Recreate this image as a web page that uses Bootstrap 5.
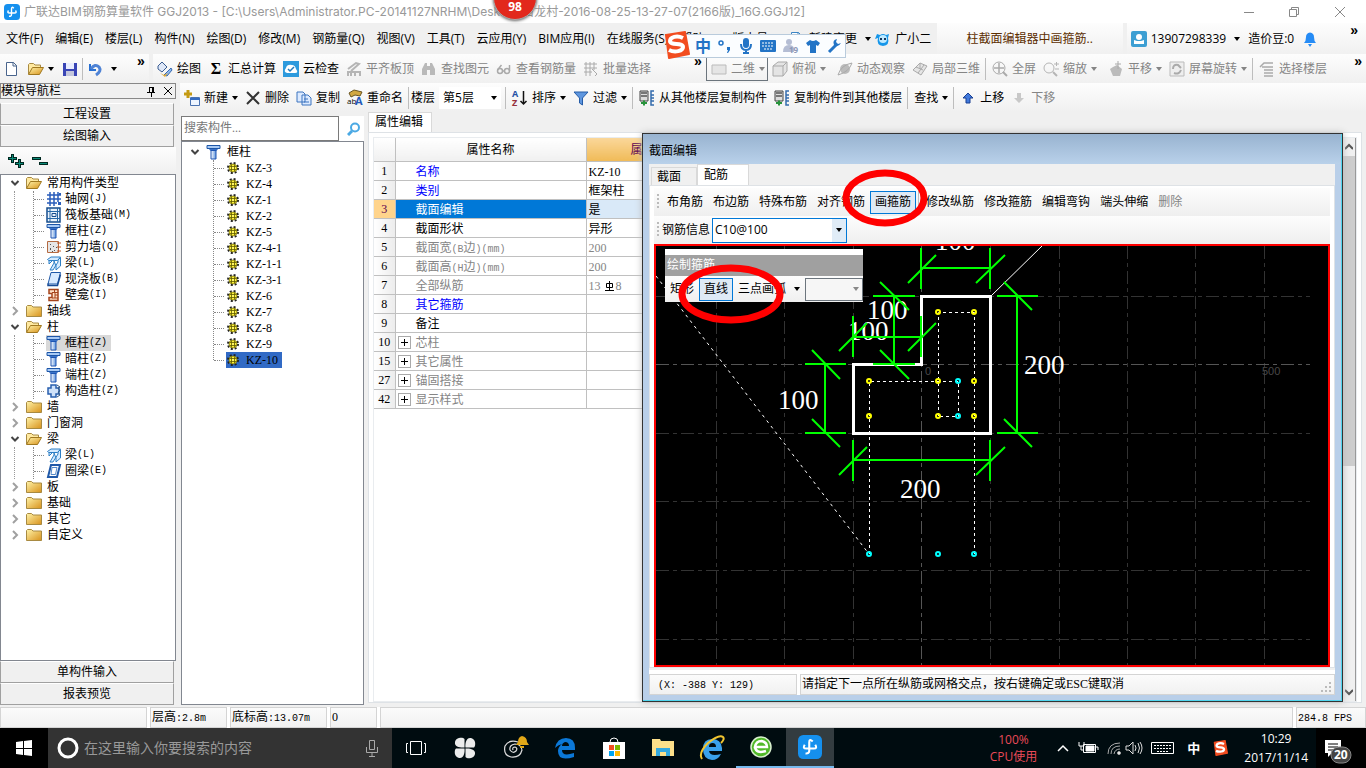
<!DOCTYPE html>
<html lang="zh-CN">
<head>
<meta charset="utf-8">
<meta name="viewport" content="width=device-width, initial-scale=1">
<title>广联达BIM钢筋算量软件 GGJ2013</title>
<link rel="stylesheet" href="https://cdn.jsdelivr.net/npm/bootstrap@5.3.0/dist/css/bootstrap.min.css">
<style>
body{font:12px/16px "Open Sans","Noto Sans CJK SC",sans-serif;color:#000;background:#f0f0f0;min-width:1200px;white-space:nowrap}
a{color:inherit;text-decoration:none}
button,input,select{font:inherit;color:inherit}
svg{flex:none;display:block}
.plain{border:0;background:none;padding:0}
.ic{width:16px;height:16px;overflow:visible}
.titlebar{height:23px;background:#fff;color:#999;font-family:Inter,"Noto Sans CJK SC",sans-serif}
.menubar{height:31px}
.menubar .entry{padding:0 6px}
.soft{background:linear-gradient(#fdfdfd,#f0f0f0)}
.notice{width:186px;color:#5c2e00}
.tools{height:29px}
.tb{border:0;background:none;padding:0 3px 0 4px;display:flex;align-items:center;gap:4px;height:24px}
.tb:disabled,.off{color:#858585}
.caret{width:0;height:0;border:3px solid transparent;border-top:4px solid currentColor;border-bottom:0;margin:0 4px 0 3px}
.caret-near{margin:0}
.vline{width:1px;height:22px;background:#bdbdbd;margin:0 2px}
.more{font:bold 14px/14px "Liberation Sans",sans-serif;align-self:flex-start}
.song{font-family:"Liberation Serif","Noto Sans CJK SC",serif}
.song i,.mono{font:normal 10px/12px "Liberation Mono","Noto Sans CJK SC",monospace}
/* left dock */
.dock{width:176px;flex:none}
.dock-head{height:16px;border:1px solid #888}
.dock-btn{height:22px;border:1px solid #a0a0a0;border-top-color:#fff;background:#f0f0f0;padding:0;width:174px}
.tree{border:1px solid #828790;background:#fff}
.node{height:16px;display:flex;align-items:center;padding-left:9px}
.node .chev{width:10px;height:10px;margin-right:6px}
.node .fold{margin-right:5px}
.kids{margin-left:13px;border-left:1px dotted #999;padding-left:18px}
.kids .node{padding-left:0}
.kids .node::before,.parts .node::before{content:"";width:10px;border-top:1px dotted #888;margin-right:2px}
.kids .inner{border-left:1px dotted #888;margin-bottom:7px}
.kids .inner .node:last-child{margin-bottom:-7px}
.kids .ic{margin-right:3px}
/* component list */
.comp{width:188px;flex:none;padding-left:5px}
.find{height:25px;border:1px solid #7a7a7a;width:158px;background:#fff;padding:0 2px}
.find::placeholder{color:#777;opacity:1}
.parts-tree{padding-top:2px}
.parts{margin-left:31px;border-left:1px dotted #888;height:200px}
.parts .node{padding-left:0}
.parts .node svg{width:14px;height:14px}
.parts .tag{height:16px;padding:0 4px 0 0;display:flex;align-items:center;gap:6px}
.parts .sel{background:#316ac5}
/* property grid */
.tabtop{height:20px;width:64px;background:#fff;border:1px solid #d9d9d9;border-bottom:0;padding:1px 6px}
.grid{width:970px;table-layout:fixed;border-collapse:collapse}
.grid td,.grid th{height:19px;line-height:16px;border:1px solid #c0c0c0;border-width:0 1px 1px 0;padding:2px 2px 0;font-weight:400}
.grid thead th{height:23px;background:linear-gradient(#fff,#f0f0f0);text-align:center}
.grid tbody th{text-align:center;background:linear-gradient(90deg,#fff,#ececec);padding:0}
.grid .key{padding:2px 0 0 20px}
.grid .tree-key{padding-left:2px}
.grid .blue{color:#00f}
.box{width:13px;height:13px;border:1px solid #aaa;margin-right:5px;padding:1px}
/* editor window */
.editor{position:absolute;left:466px;right:23px;top:21px;bottom:5px;border:1px solid #333;background:#b9cfe9;padding:0 7px 6px 6px;box-shadow:inset -1px -1px #50d5ee,0 0 7px #bbb;display:flex;flex-direction:column}
.editor-title{height:30px;margin:0 -6px;padding:9px 6px 0;background:linear-gradient(#98b3d0,#b9d1ea)}
.pagetab{border:1px solid #d9d9d9;border-bottom:0;background:#f0f0f0;height:18px;padding:0 5px;text-align:left;width:46px}
.pagetab.on{background:#fff;height:21px;width:52px;padding:0 6px}
.sheet{padding:2px 4px 0;min-height:0}
.strip{height:28px;background:linear-gradient(#fdfdfd,#efefef)}
.strip .cmd{border:0;background:none;padding:0 5px;height:24px}
.strip .cmd:disabled{color:#858585}
.strip .cmd.on{border:1px solid #0078d7;background:#dfeaf5;padding:0 4px;height:23px}
.grip{width:2px;height:16px;margin:0 3px;background:repeating-linear-gradient(#bbb 0 2px,transparent 2px 4px)}
.combo{border:1px solid #0078d7;background:#fff;height:25px;width:135px;margin-left:2px}
.mode{appearance:none;width:58px;height:23px;background:#f6f6f6 url("data:image/svg+xml,%3Csvg xmlns='http://www.w3.org/2000/svg' width='6' height='4'%3E%3Cpath d='M0 0h6L3 4z' fill='%23888'/%3E%3C/svg%3E") no-repeat right 3px center}
.stage{border:2px solid #f00;background:#000;flex:1;min-height:0;overflow:hidden}
.float{left:9px;top:3px;width:198px;border-top:6px solid #fff}
.float-title{height:21px;background:#a0a0a0;color:#fff;padding:2px}
.ring{position:absolute;pointer-events:none}
.cells{gap:3px}
.statcell{border:1px solid #d4d4d4;height:21px;line-height:19px;background:linear-gradient(#fbfbfb,#f1f1f1);padding:0 1px}
.rail{width:15px;background:#f0f0f0;border-right:1px solid #999}
.thumb{height:310px;background:#cdcdcd}
/* overlays */
.ime{left:668px;top:34px;width:178px;height:24px;border:1px solid #b9cbdc;background:#fbfdff;color:#2374c6;padding-left:22px;gap:7px}
.count{left:493px;top:-24px;width:44px;height:44px;border-radius:50%;background:#e2281c;border:1px solid #aaa;box-shadow:0 1px 3px #666;color:#fff;font-weight:700;padding-top:22px;text-align:center}
/* taskbar */
.taskbar{height:40px;background:#000c10;color:#fff}
.ask{width:344px;background:#333;padding:0 13px 0 8px}
.ask input{background:none;border:0;font-size:14px;flex:1;outline:0;padding:0}
.ask input::placeholder{color:#999;opacity:1}
.app{width:50px;height:40px;border:0;background:none;padding:0;display:flex;align-items:center;justify-content:center}
.app.slim{width:48px}
.app.live{border-bottom:2px solid #76b9ed}
.app.front{background:#333c40;width:48px}
.cpu{color:#e84a58;line-height:17px}
.clock{line-height:19px}
.bell{width:50px;height:40px}
</style>
</head>
<body class="vh-100 d-flex flex-column overflow-hidden position-relative">
<svg width="0" height="0" class="position-absolute">
<defs>
<linearGradient id="gy" x2="1" y2="1"><stop stop-color="#fff3a8"/><stop offset="1" stop-color="#d8921c"/></linearGradient>
<linearGradient id="gb" x2="1"><stop stop-color="#fff"/><stop offset="1" stop-color="#5d93dd"/></linearGradient>
<symbol id="down" viewBox="0 0 10 10"><path d="M1.500 3l3.500 3.500L8.500 3" fill="none" stroke="#444" stroke-width="2"/></symbol>
<symbol id="right" viewBox="0 0 10 10"><path d="M3 1l4 4-4 4" fill="none" stroke="#a0a0a0" stroke-width="2"/></symbol>
<symbol id="fo" viewBox="0 0 16 16"><path d="M.5 13V3.500l1-1h4l1.500 1.500h5.500v2.500" fill="#ffe9a0" stroke="#a88a42"/><path d="M.5 13.500L4.500 6.500h11l-4 7z" fill="url(#gy)" stroke="#a07820"/></symbol>
<symbol id="fc" viewBox="0 0 16 16"><path d="M.5 13.500V3.500l1-1h4L7 4h8.500v9.500z" fill="url(#gy)" stroke="#a88a42"/></symbol>
<symbol id="net" viewBox="0 0 16 16"><path d="M4 1v14M8 1v14M12 1v10M1 4h14M1 8h14M1 12h10" stroke="#2a5dbb" stroke-width="1.500"/><path d="M12 11h3v3h-3zM13 2h2v2h-2z" fill="#2a5dbb"/></symbol>
<symbol id="raft" viewBox="0 0 16 16"><path d="M1 1h13v14H1z" fill="#e8f2fc" stroke="#164c8c" stroke-width="1.500"/><path d="M4 1v14M11.500 1v14M1 4.500h13M1 11.500h13" stroke="#2869a8"/><path d="M6 6.500h4v3H6z" fill="none" stroke="#164c8c"/></symbol>
<symbol id="col" viewBox="0 0 16 16"><path d="M1 1.500h13v3H1z" fill="#a8caf5" stroke="#1d56a8"/><path d="M3 5h9l-1.500 2h-6z" fill="#3a72c8"/><path d="M5 6.500h5v8.500H5z" fill="url(#gb)" stroke="#1e55b2"/></symbol>
<symbol id="wall" viewBox="0 0 16 16"><path d="M1.500 2.500h11v11h-11z" fill="#e6e6e6" stroke="#b46a42"/><path d="M4 5h1v1H4zM7 7h1v1H7zM4 9h1v2H4zM8 11h1v1H8zM10 8h1v1h-1zM6 12h1v1H6z" fill="#555"/><path d="M11 4h4M11 8h4M11 12h4" stroke="#c35420"/></symbol>
<symbol id="beam" viewBox="0 0 16 16"><path d="M1.500 4.500L5 2h9.500l-3 3.500h-9z" fill="#d5ebff" stroke="#2d7fc5"/><path d="M3 6v3l3-3M8 6v2l-4 7h3l5-8V5l2.500-2.500V11L10 15v-4z" fill="#d5ebff" stroke="#2d7fc5"/></symbol>
<symbol id="slab" viewBox="0 0 16 16"><path d="M5 1.500h9.500L11.500 13H2z" fill="#d8eaff" stroke="#1f58a8"/><path d="M2 12.500v2h9.500l3-11" fill="none" stroke="#174b96" stroke-width="1.500"/></symbol>
<symbol id="ring" viewBox="0 0 16 16"><path d="M5 2h9L11 14H2z" fill="#fff" stroke="#1f58a8" stroke-width="2"/><path d="M6 4.500h5L9.500 11.500H5z" fill="none" stroke="#5489c8"/></symbol>
<symbol id="niche" viewBox="0 0 16 16"><path d="M3 2.500h9v11H3v-3h3v-4H3z" fill="#ffe2c8" stroke="#a5441c" stroke-width="1.500"/><path d="M6 5.500h6M9 8h3M6 11h6M8.500 3v2.500M9 6v5" stroke="#a5441c"/></symbol>
<symbol id="cons" viewBox="0 0 16 16"><path d="M5 2h5v3h3v6h-3v3H5v-3H2V5h3z" fill="#cfe2fa" stroke="#285fae" stroke-width="1.500"/><path d="M11 2l3 2-2 1 2 3-2 1 2 3-3 2" fill="none" stroke="#31557f"/></symbol>
<symbol id="gear" viewBox="0 0 14 14"><circle cx="7" cy="7" r="5" fill="none" stroke="#222" stroke-width="2" stroke-dasharray="2 1.930"/><circle cx="7" cy="7" r="4" fill="#fff23a" stroke="#6e6800" stroke-width=".8"/><path d="M5.500 4v6M8.500 4v6M4 5.500h6M4 8.500h6" stroke="#5f5a00" stroke-width=".8"/><path d="M6.500 6.500h1v1h-1z" fill="#fff"/></symbol>
<symbol id="logo" viewBox="0 0 16 16"><rect width="16" height="16" rx="3.500" fill="#1590ee"/><path d="M9.800 4.300Q7.500 2 7.500 5v5.500q0 2-2.500 1.800M4.500 6.500Q2.800 9 5.500 9h5q2.700 0 1-2.500" fill="none" stroke="#fff" stroke-width="1.400"/></symbol>
<symbol id="sogou" viewBox="0 0 28 28"><path d="M4 4L23 1l4 22L7 27z" fill="#f24d20" stroke="#f24d20" stroke-linejoin="round" stroke-width="2"/><path d="M21 7c-6-3-13-1-13 3 0 5 13 1 13 6 0 4-8 6-14 3" fill="none" stroke="#fff" stroke-width="4"/></symbol>
<symbol id="gray3" viewBox="0 0 16 16"><path d="M1 5l5-4h9v9l-4 5H1zM1 5h10v10M11 5l4-4" fill="#e4e4e4" stroke="#aaa"/></symbol>
<symbol id="floors" viewBox="0 0 16 16"><path d="M1 1h8v10H1z" fill="#ddd" stroke="#444"/><path d="M2 3h6M2 6h6" stroke="#555" stroke-width="1.500"/><path d="M2 13h6M5 10.500v5" stroke="#28933b" stroke-width="2"/><path d="M15 1h-3v14h3M12 5h3M12 8h3M12 11h3" fill="none" stroke="#356cad" stroke-width="1.500"/></symbol>
</defs></svg>

<header class="titlebar d-flex align-items-center ps-1 pe-3">
<svg width="16" height="16"><use href="#logo"/></svg>
<span class="ps-1 flex-grow-1">广联达BIM钢筋算量软件 GGJ2013 - [C:\Users\Administrator.PC-20141127NRHM\Desktop\白龙村-2016-08-25-13-27-07(2166版)_16G.GGJ12]</span>
<svg width="106" height="12" fill="none" stroke="#888"><path d="M0 6.500h10M45.500 3.500h7v7h-7zM47.500 3V1.500h7v7H53M91 1l10 10M101 1L91 11"/></svg>
</header>

<nav class="menubar d-flex align-items-center">
<div class="d-flex flex-grow-1">
<a class="entry" href="#">文件(F)</a><a class="entry" href="#">编辑(E)</a><a class="entry" href="#">楼层(L)</a><a class="entry" href="#">构件(N)</a><a class="entry" href="#">绘图(D)</a><a class="entry" href="#">修改(M)</a><a class="entry" href="#">钢筋量(Q)</a><a class="entry" href="#">视图(V)</a><a class="entry" href="#">工具(T)</a><a class="entry" href="#">云应用(Y)</a><a class="entry" href="#">BIM应用(I)</a><a class="entry" href="#">在线服务(S)</a><a class="entry" href="#">帮助(H)</a><a class="entry" href="#">版本号(B)</a>
<a class="d-flex align-items-center gap-1" href="#"><svg width="16" height="16" fill="#fff" stroke="#3b85c5"><path d="M2.500 1.500h7l4 4v9h-11zM9 1v5h5M6 11h8"/></svg>新建变更<span class="caret ms-1"></span></a>
<a class="d-flex align-items-center gap-1" href="#"><svg width="16" height="16"><path d="M2 3l3 1q3-2 6 0l3-1-1 4q2 7-5 8-7-1-5-8L0 8z" fill="#1596ea"/><circle cx="8" cy="8" r="4" fill="#bfe9ff"/><path d="M5 7h2v2H5zM9 7h2v2H9z" fill="#14375c"/></svg>广小二</a>
</div>
<div class="d-flex">
<a class="soft notice text-center py-2 me-1" href="#">柱截面编辑器中画箍筋..</a>
<div class="soft d-flex align-items-center ps-1 gap-1">
<svg class="ic" viewBox="0 0 16 16"><rect width="16" height="16" rx="2" fill="#3d9fd3"/><circle cx="8" cy="6" r="3" fill="#fff"/><path d="M3 13V9l3 1h4l3-1v4z" fill="#fff"/></svg>
<a href="#">13907298339</a><span class="caret ms-1"></span><span>造价豆:0</span>
<svg class="ms-1" width="16" height="16"><path d="M2 12q2-2 2-6 0-4 4-4.500Q12 2 12 6q0 4 2 6zM6 13h4l-2 3z" fill="#258bf5"/></svg>
<span class="more ps-4 ms-1 pe-2">»</span>
</div></div>
</nav>

<div class="tools d-flex align-items-center">
<div class="soft d-flex align-items-center ps-1 h-100" style="width:149px">
<button class="plain" aria-label="新建"><svg class="ic" viewBox="0 0 16 16"><path d="M2.500 1.500h7l3 3v10h-10zM9 1v4h4" fill="#fff" stroke="#49648c"/></svg></button>
<button class="plain ps-2 d-flex align-items-center" aria-label="打开"><svg class="ic" viewBox="0 0 16 16"><use href="#fo"/></svg><span class="caret ms-1"></span></button>
<button class="plain ps-1" aria-label="保存"><svg class="ic" viewBox="0 0 16 16"><path d="M1 2h14v13H1z" fill="#3945b5"/><path d="M4 2h8v6H4z" fill="#e9edff"/><path d="M4 10h8v5H4z" fill="#c3c6dc"/></svg></button>
<span class="vline ms-1 me-1"></span>
<button class="plain d-flex align-items-center" aria-label="撤销"><svg class="ic" viewBox="0 0 16 16"><path d="M3 3v6h6" fill="none" stroke="#286fd1" stroke-width="2"/><path d="M4 8q4-6 8-2 3 4-3 8" fill="none" stroke="#4f83d5" stroke-width="3"/></svg><span class="caret ms-2"></span></button>
<span class="more ps-3">»</span>
</div>
<div class="soft d-flex align-items-center h-100 ms-1 flex-grow-1">
<button class="tb"><svg class="ic" viewBox="0 0 16 16"><path d="M1 5l4-4 5 5-5 5-4-3z" fill="#dfe8f8" stroke="#3a5c91"/><path d="M7 14l7-7 1 2-5 6z" fill="#8db7ee" stroke="#3668ae"/><path d="M3 12l4 2 4-2-3 4z" fill="#e0aa32"/></svg>绘图</button>
<button class="tb"><b class="ic text-center fs-6 song">Σ</b>汇总计算</button>
<button class="tb"><svg class="ic" viewBox="0 0 16 16"><path d="M0 0h16v16H0z" fill="#2d9add"/><path d="M4 12q-4-1-1-5 1-4 6-3 3 0 4 4 3 4-1 4z" fill="#fff"/><path d="M5 8l2 2 4-4" fill="none" stroke="#237bbc" stroke-width="1.500"/></svg>云检查</button>
<button class="tb" disabled><svg class="ic" viewBox="0 0 16 16"><path d="M2 8l8-6 3 1-8 7M2 15v-4h12v4M5 15v-5M9 15v-5" fill="none" stroke="#b5b5b5" stroke-width="2"/></svg>平齐板顶</button>
<button class="tb" disabled><svg class="ic" viewBox="0 0 16 16"><path d="M1 14V8l3-6h2v12zM9 14V2h2l3 6v6zM6 5h3v4H6z" fill="#b9b9b9"/></svg>查找图元</button>
<button class="tb" disabled><svg class="ic" viewBox="0 0 16 16" fill="none" stroke="#aaa" stroke-width="1.500"><circle cx="4" cy="10" r="2.500"/><circle cx="11" cy="10" r="2.500"/><path d="M1.500 9l4-5M13.500 10V4M6 10h3"/></svg>查看钢筋量</button>
<button class="tb" disabled><svg class="ic" viewBox="0 0 16 16" fill="none" stroke="#aaa"><path d="M1 3h13M1 7h13M1 11h8M3 1v14M7 1v14M11 1v8M9 8l5 5-2 2"/></svg>批量选择</button>
<span class="more ps-4 ms-3 me-1">»</span>
<button class="tb border border-secondary" disabled style="width:62px"><svg class="ic" viewBox="0 0 16 16"><path d="M1 4h14v9H1z" fill="#e5e5e5" stroke="#bbb"/></svg>二维<span class="caret caret-near"></span></button>
<button class="tb" disabled><svg class="ic"><use href="#gray3"/></svg>俯视<span class="caret caret-near"></span></button>
<button class="tb ms-1" disabled><svg class="ic" viewBox="0 0 16 16"><circle cx="8" cy="8" r="5" fill="#bbb"/><path d="M1 14Q4 4 15 2 12 11 1 14" fill="none" stroke="#aaa"/></svg>动态观察</button>
<button class="tb" disabled><svg class="ic" viewBox="0 0 16 16"><path d="M1 9l7-7 7 3-6 9zM4 6l7 3M6 12l6-8M8 2v6" fill="#e5e5e5" stroke="#aaa"/></svg>局部三维</button>
<span class="vline"></span>
<button class="tb" disabled><svg class="ic" viewBox="0 0 16 16" fill="none" stroke="#aaa"><circle cx="7" cy="7" r="6"/><path d="M7 2v10M2 7h10" stroke-width="1.500"/><path d="M11 11l4 4" stroke-width="2"/></svg>全屏</button>
<button class="tb" disabled><svg class="ic" viewBox="0 0 16 16" fill="none" stroke="#b5b5b5"><circle cx="6" cy="7" r="5"/><path d="M10 11l4 4" stroke-width="2"/><path d="M11 3h5M13.500 1v4M12 8h4"/></svg>缩放<span class="caret caret-near"></span></button>
<button class="tb ms-1" disabled><svg class="ic" viewBox="0 0 16 16"><path d="M2 8l3-2 4-2 5 4-2 7H5z" fill="#bbb"/><path d="M10 0v8M7 3h6" stroke="#aaa"/></svg>平移<span class="caret caret-near"></span></button>
<button class="tb" disabled><svg class="ic" viewBox="0 0 16 16"><path d="M1 1h14v14H1z" fill="#eee" stroke="#bbb"/><path d="M4 8q0-5 5-4l3 3M12 9q-2 5-7 3" fill="none" stroke="#aaa" stroke-width="2"/></svg>屏幕旋转<span class="caret caret-near"></span></button>
<span class="vline"></span>
<button class="tb" disabled><svg class="ic" viewBox="0 0 16 16"><path d="M1 6l4-4h9M3 6h11M5 9h9M5 12h9M5 15h9" fill="none" stroke="#aaa" stroke-width="1.500"/></svg>选择楼层</button>
<span class="more ms-auto pe-1">»</span>
</div></div>

<main class="flex-grow-1 d-flex" style="min-height:0">
<aside class="dock d-flex flex-column song">
<div class="dock-head d-flex align-items-center mb-1"><span class="flex-grow-1">模块导航栏</span>
<svg width="30" height="12" fill="none" stroke="#000"><path d="M4.500 2v5M8.500 2v5M4 2.500h4M2 7.500h8M6.500 8v4M7.500 2v5M19 2l8 8M27 2l-8 8"/></svg></div>
<button class="dock-btn">工程设置</button><button class="dock-btn">绘图输入</button>
<div class="d-flex align-items-center gap-2 px-2 soft" style="height:27px">
<button class="plain" aria-label="全部展开"><svg width="16" height="16"><path d="M4.500 1v9M0 5.500h9M11.500 6v9M7 10.500h9" stroke="#002820" stroke-width="3"/><path d="M4.500 2v7M1 5.500h7M11.500 7v7M8 10.500h7" stroke="#0c8a78"/></svg></button>
<button class="plain" aria-label="全部折叠"><svg width="16" height="16"><path d="M0 5.500h9M7 10.500h9" stroke="#002820" stroke-width="3"/><path d="M1 5.500h7M8 10.500h7" stroke="#0c8a78"/></svg></button></div>
<div class="tree flex-grow-1 overflow-hidden">
<div class="node"><svg class="chev"><use href="#down"/></svg><svg class="ic fold"><use href="#fo"/></svg>常用构件类型</div>
<div class="kids"><div class="inner">
<div class="node"><svg class="ic"><use href="#net"/></svg>轴网<i>(J)</i></div>
<div class="node"><svg class="ic"><use href="#raft"/></svg>筏板基础<i>(M)</i></div>
<div class="node"><svg class="ic"><use href="#col"/></svg>框柱<i>(Z)</i></div>
<div class="node"><svg class="ic"><use href="#wall"/></svg>剪力墙<i>(Q)</i></div>
<div class="node"><svg class="ic"><use href="#beam"/></svg>梁<i>(L)</i></div>
<div class="node"><svg class="ic"><use href="#slab"/></svg>现浇板<i>(B)</i></div>
<div class="node"><svg class="ic"><use href="#niche"/></svg>壁龛<i>(I)</i></div></div></div>
<div class="node"><svg class="chev"><use href="#right"/></svg><svg class="ic fold"><use href="#fc"/></svg>轴线</div>
<div class="node"><svg class="chev"><use href="#down"/></svg><svg class="ic fold"><use href="#fo"/></svg>柱</div>
<div class="kids"><div class="inner">
<div class="node"><span class="d-flex align-items-center pe-1" style="background:#d9d9d9"><svg class="ic"><use href="#col"/></svg>框柱<i>(Z)</i></span></div>
<div class="node"><svg class="ic"><use href="#col"/></svg>暗柱<i>(Z)</i></div>
<div class="node"><svg class="ic"><use href="#col"/></svg>端柱<i>(Z)</i></div>
<div class="node"><svg class="ic"><use href="#cons"/></svg>构造柱<i>(Z)</i></div></div></div>
<div class="node"><svg class="chev"><use href="#right"/></svg><svg class="ic fold"><use href="#fc"/></svg>墙</div>
<div class="node"><svg class="chev"><use href="#right"/></svg><svg class="ic fold"><use href="#fc"/></svg>门窗洞</div>
<div class="node"><svg class="chev"><use href="#down"/></svg><svg class="ic fold"><use href="#fo"/></svg>梁</div>
<div class="kids"><div class="inner">
<div class="node"><svg class="ic"><use href="#beam"/></svg>梁<i>(L)</i></div>
<div class="node"><svg class="ic"><use href="#ring"/></svg>圈梁<i>(E)</i></div></div></div>
<div class="node"><svg class="chev"><use href="#right"/></svg><svg class="ic fold"><use href="#fc"/></svg>板</div>
<div class="node"><svg class="chev"><use href="#right"/></svg><svg class="ic fold"><use href="#fc"/></svg>基础</div>
<div class="node"><svg class="chev"><use href="#right"/></svg><svg class="ic fold"><use href="#fc"/></svg>其它</div>
<div class="node"><svg class="chev"><use href="#right"/></svg><svg class="ic fold"><use href="#fc"/></svg>自定义</div>
</div>
<button class="dock-btn">单构件输入</button><button class="dock-btn" style="margin-bottom:2px">报表预览</button>
</aside>

<section class="flex-grow-1 d-flex flex-column" style="min-width:0">
<div class="soft d-flex align-items-center tools ms-1 ps-1">
<button class="tb ps-0"><svg class="ic" viewBox="0 0 16 16"><path d="M4 0v8M0 4h8" stroke="#c59b13" stroke-width="3"/><path d="M6.500 7.500h9v8h-9z" fill="#eef5ff" stroke="#4a72b0"/><path d="M6 8h10v2H6z" fill="#356bc0"/></svg>新建<span class="caret caret-near"></span></button>
<button class="tb"><svg class="ic" viewBox="0 0 16 16"><path d="M2 2l12 12M14 2L2 14" stroke="#333" stroke-width="2"/></svg>删除</button>
<button class="tb"><svg class="ic" viewBox="0 0 16 16" fill="#dceaff" stroke="#3d74bf"><path d="M1 2h6l2 2v8H1zM6 5h6l3 3v7H6zM8 9h4M8 12h5"/></svg>复制</button>
<button class="tb"><svg class="ic" viewBox="0 0 16 16"><path d="M2 3l5-3 8 2-2 4-5-1-4 2z" fill="#d2a742" stroke="#695522"/><text x="0" y="14" font-size="8">ab</text><text x="8" y="15" font-size="11" font-weight="700" fill="#2558b8">A</text></svg>重命名</button>
<span class="vline"></span><label for="floor">楼层</label>
<div class="d-flex align-items-center bg-white ms-1 pe-1" style="width:62px;height:22px"><input id="floor" class="plain ps-1 flex-grow-1" style="width:30px" value="第5层"><span class="caret caret-near"></span></div>
<span class="vline ms-1"></span>
<button class="tb"><svg class="ic" viewBox="0 0 16 16"><text x="0" y="7" font-size="9" font-weight="700" fill="#2452a5">A</text><text x="0" y="16" font-size="9" font-weight="700" fill="#95303c">Z</text><path d="M11.500 1v13M8.500 11l3 3 3-3" fill="none" stroke="#111" stroke-width="1.500"/></svg>排序<span class="caret caret-near"></span></button>
<button class="tb"><svg class="ic" viewBox="0 0 16 16"><path d="M1 2h14L9.500 8v7l-3-2V8z" fill="#5e96df" stroke="#255ca7"/></svg>过滤<span class="caret caret-near"></span></button>
<span class="vline"></span>
<button class="tb"><svg class="ic"><use href="#floors"/></svg>从其他楼层复制构件</button>
<button class="tb"><svg class="ic"><use href="#floors"/></svg>复制构件到其他楼层</button>
<span class="vline"></span>
<button class="tb">查找<span class="caret caret-near"></span></button><span class="vline"></span>
<button class="tb"><svg class="ic" viewBox="0 0 16 16"><path d="M8 3l5 5h-3v5H6V8H3z" fill="#4179dc" stroke="#183f91"/></svg>上移</button>
<button class="tb" disabled><svg class="ic" viewBox="0 0 16 16"><path d="M8 13l5-5h-3V3H6v5H3z" fill="#c8c8c8"/></svg>下移</button>
</div>
<div class="flex-grow-1 d-flex position-relative" style="min-height:0">
<div class="comp d-flex flex-column song pt-1" style="padding-bottom:2px">
<div class="d-flex align-items-center gap-2 bg-white"><input class="find" placeholder="搜索构件..." aria-label="搜索构件">
<button class="plain" aria-label="搜索"><svg width="14" height="14" fill="none" stroke="#4ba9e4" stroke-width="2"><circle cx="8" cy="5.500" r="4"/><path d="M5 9l-4 4" stroke-width="3"/></svg></button></div>
<div class="tree parts-tree flex-grow-1 overflow-hidden">
<div class="node ps-1"><svg class="chev ms-1"><use href="#down"/></svg><svg class="ic fold"><use href="#col"/></svg><span>框柱</span></div>
<div class="parts">
<div class="node"><span class="tag"><svg><use href="#gear"/></svg>KZ-3</span></div>
<div class="node"><span class="tag"><svg><use href="#gear"/></svg>KZ-4</span></div>
<div class="node"><span class="tag"><svg><use href="#gear"/></svg>KZ-1</span></div>
<div class="node"><span class="tag"><svg><use href="#gear"/></svg>KZ-2</span></div>
<div class="node"><span class="tag"><svg><use href="#gear"/></svg>KZ-5</span></div>
<div class="node"><span class="tag"><svg><use href="#gear"/></svg>KZ-4-1</span></div>
<div class="node"><span class="tag"><svg><use href="#gear"/></svg>KZ-1-1</span></div>
<div class="node"><span class="tag"><svg><use href="#gear"/></svg>KZ-3-1</span></div>
<div class="node"><span class="tag"><svg><use href="#gear"/></svg>KZ-6</span></div>
<div class="node"><span class="tag"><svg><use href="#gear"/></svg>KZ-7</span></div>
<div class="node"><span class="tag"><svg><use href="#gear"/></svg>KZ-8</span></div>
<div class="node"><span class="tag"><svg><use href="#gear"/></svg>KZ-9</span></div>
<div class="node"><span class="tag sel"><svg><use href="#gear"/></svg>KZ-10</span></div>
</div></div></div>

<div class="flex-grow-1 d-flex flex-column song ms-1 pb-1 pe-1" style="min-width:0">
<div class="tabtop">属性编辑</div>
<div class="flex-grow-1 bg-white border p-1 pb-0" style="min-height:0">
<div class="d-flex h-100 border border-secondary-subtle overflow-hidden">
<div class="flex-grow-1 overflow-hidden">
<table class="grid">
<colgroup><col style="width:21px"><col style="width:191px"><col></colgroup>
<thead><tr><th></th><th>属性名称</th><th class="text-start" style="background:linear-gradient(#fad79a,#f0bb58);color:#5a0050;padding-left:44px">属性值</th></tr></thead>
<tbody>
<tr><th>1</th><td class="key blue">名称</td><td>KZ-10</td></tr>
<tr><th>2</th><td class="key blue">类别</td><td>框架柱</td></tr>
<tr><th style="background:#ffd48c;color:#5a0050">3</th><td class="key" style="background:#0078d7;color:#fff">截面编辑</td><td style="background:#d9e9f8">是</td></tr>
<tr><th>4</th><td class="key">截面形状</td><td>异形</td></tr>
<tr><th>5</th><td class="key off">截面宽<i>(B</i>边<i>)(mm)</i></td><td class="off">200</td></tr>
<tr><th>6</th><td class="key off">截面高<i>(H</i>边<i>)(mm)</i></td><td class="off">200</td></tr>
<tr><th>7</th><td class="key off">全部纵筋</td><td class="off"><span class="d-flex align-items-center">13<svg class="ms-1" width="11" height="12" fill="none" stroke="#000"><path d="M4.500 1v9M0 10.500h9M1.500 3.500h6v4h-6z"/></svg>8</span></td></tr>
<tr><th>8</th><td class="key blue">其它箍筋</td><td></td></tr>
<tr><th>9</th><td class="key">备注</td><td></td></tr>
<tr><th>10</th><td class="tree-key off"><span class="d-flex align-items-center"><svg class="box" viewBox="0 0 9 9" stroke="#000"><path d="M4.500 1v7M1 4.500h7"/></svg>芯柱</span></td><td></td></tr>
<tr><th>15</th><td class="tree-key off"><span class="d-flex align-items-center"><svg class="box" viewBox="0 0 9 9" stroke="#000"><path d="M4.500 1v7M1 4.500h7"/></svg>其它属性</span></td><td></td></tr>
<tr><th>27</th><td class="tree-key off"><span class="d-flex align-items-center"><svg class="box" viewBox="0 0 9 9" stroke="#000"><path d="M4.500 1v7M1 4.500h7"/></svg>锚固搭接</span></td><td></td></tr>
<tr><th>42</th><td class="tree-key off"><span class="d-flex align-items-center"><svg class="box" viewBox="0 0 9 9" stroke="#000"><path d="M4.500 1v7M1 4.500h7"/></svg>显示样式</span></td><td></td></tr>
</tbody></table></div>
<div class="rail d-flex flex-column"><svg class="m-1" width="8" height="10"><path d="M0 7l4-4 4 4" fill="none" stroke="#555" stroke-width="2"/></svg><div class="thumb"></div><svg class="m-1 mt-auto" width="8" height="10"><path d="M0 3l4 4 4-4" fill="none" stroke="#555" stroke-width="2"/></svg></div>
</div></div></div>

<div class="editor" role="dialog" aria-label="截面编辑">
<div class="editor-title">截面编辑</div>
<div class="flex-grow-1 d-flex flex-column" style="background:#f0f0f0;min-height:0">
<div class="d-flex align-items-end song" style="padding-left:2px" role="tablist"><button class="pagetab" role="tab">截面</button><button class="pagetab on" role="tab">配筋</button></div>
<div class="flex-grow-1 d-flex flex-column border bg-white sheet">
<div class="strip d-flex align-items-center"><span class="grip"></span>
<button class="cmd">布角筋</button><button class="cmd">布边筋</button><button class="cmd">特殊布筋</button><button class="cmd">对齐钢筋</button><button class="cmd on">画箍筋</button><span class="vline"></span><button class="cmd">修改纵筋</button><button class="cmd">修改箍筋</button><button class="cmd">编辑弯钩</button><button class="cmd">端头伸缩</button><button class="cmd" disabled>删除</button></div>
<div class="strip d-flex align-items-center"><span class="grip"></span><label for="bar">钢筋信息</label>
<div class="combo d-flex align-items-stretch"><input id="bar" class="plain flex-grow-1" style="width:60px;padding-left:2px" value="C10@100"><button class="plain px-1" style="background:#e0ecf7" aria-label="展开"><span class="caret caret-near d-block"></span></button></div></div>
<div class="stage position-relative">
<svg width="100%" height="100%" class="position-absolute">
<g transform="translate(-656 -246)" fill="none">
<g stroke="#333" stroke-dasharray="13 4 4 4"><path d="M716.500 246v422M784.500 246v422M853.500 246v422M990.500 246v422M1059.500 246v422M1127.500 246v422M1195.500 246v422M1264.500 246v422M656 296.500h654M656 433.500h654M656 501.500h654M656 570.500h654M656 639.500h654"/><path d="M921.500 246v422M656 364.500h654" stroke="#555"/></g>
<path d="M921.500 296.500h69v137h-137v-69h68z" stroke="#fff" stroke-width="3"/>
<path d="M991 296l51-50" stroke="#fff"/>
<g fill="#fff" font-family="Liberation Serif" font-size="27"><text x="935" y="250">100</text><text x="867" y="319">100</text><text x="848" y="340">100</text><text x="778" y="409">100</text><text x="900" y="498">200</text><text x="1024" y="374">200</text></g>
<g stroke="#0f0" stroke-width="2"><path d="M921 268h69M921 248v41M990 248v41M908 283l28-28M976 283l29-28M894 296v68M873 296h42M873 364h42M880 282l29 28M880 350l29 29M853 337h68M853 316v41M921 316v41M839 351l28-28M908 351l28-28M825 364v69M805 364h41M805 433h41M812 350l28 29M812 419l28 28M853 460h137M853 440v41M990 440v41M839 475l28-28M976 475l29-28M1017 296v137M997 296h41M997 433h41M1004 282l28 28M1004 419l28 28"/></g>
<path d="M656 276L869 554" stroke="#fff" stroke-dasharray="3 4"/>
<path d="M938.500 416V312.500h36V554M869.500 554V381.500h89V416.500h-20" stroke="#fff" stroke-dasharray="3 3"/>
<g stroke="#ff0" stroke-width="2"><circle cx="938" cy="312" r="2"/><circle cx="974" cy="312" r="2"/><circle cx="869" cy="381" r="2"/><circle cx="938" cy="381" r="2"/><circle cx="974" cy="381" r="2"/><circle cx="869" cy="416" r="2"/><circle cx="938" cy="416" r="2"/><circle cx="974" cy="416" r="2"/></g>
<g stroke="#0ff" stroke-width="2"><circle cx="958" cy="381" r="2"/><circle cx="958" cy="416" r="2"/><circle cx="869" cy="554" r="2"/><circle cx="938" cy="554" r="2"/><circle cx="974" cy="554" r="2"/></g>
<g fill="#484848" font-size="11" font-family="Liberation Sans"><text x="925" y="375">0</text><text x="1262" y="375">500</text></g>
</g></svg>
<div class="float position-absolute"><div class="float-title">绘制箍筋</div>
<div class="strip d-flex align-items-center" style="height:26px"><button class="cmd">矩形</button><button class="cmd on">直线</button><button class="cmd">三点画弧</button><span class="caret"></span><select class="mode ms-auto border border-secondary rounded-0" aria-label="方式"><option></option></select></div></div>
</div></div>
<div class="d-flex song cells bg-white pt-1" style="margin-top:2px"><div class="statcell ps-2" style="width:148px"><span class="mono">(X: -388 Y: 129)</span></div><div class="statcell flex-grow-1 d-flex">请指定下一点所在纵筋或网格交点，按右键确定或ESC键取消<svg class="ms-auto mt-auto" width="12" height="12" fill="#bbb"><path d="M8 0h2v2H8zM4 4h2v2H4zM8 4h2v2H8zM0 8h2v2H0zM4 8h2v2H4zM8 8h2v2H8z"/></svg></div></div>
</div>
<svg class="ring" style="left:199px;top:35px" width="86" height="59"><ellipse cx="43" cy="29" rx="39" ry="25" fill="none" stroke="#f00" stroke-width="7"/></svg>
<svg class="ring" style="left:34px;top:129px" width="108" height="62"><ellipse cx="54" cy="31" rx="49" ry="26" fill="none" stroke="#f00" stroke-width="7"/></svg>
</div>
</div></section></main>

<footer class="d-flex song cells bg-white">
<div class="statcell" style="width:147px"></div><div class="statcell" style="width:77px">层高<i>:2.8m</i></div><div class="statcell" style="width:97px">底标高<i>:13.07m</i></div><div class="statcell" style="width:47px">0</div><div class="statcell flex-grow-1"></div><div class="statcell" style="width:70px"><i>284.8 FPS</i></div>
</footer>

<div class="taskbar d-flex align-items-stretch">
<button class="app slim bg-black" aria-label="开始"><svg width="16" height="16"><path d="M0 2l7-1v7H0zM8 1l8-1v8H8zM0 9h7v6l-7-1zM8 9h8v7l-8-1z" fill="#fff"/></svg></button>
<div class="ask d-flex align-items-center gap-1"><svg width="24" height="24"><circle cx="12" cy="12" r="9" fill="none" stroke="#fff" stroke-width="3"/></svg><input placeholder="在这里输入你要搜索的内容" aria-label="搜索"><svg width="14" height="18" fill="none" stroke="#aaa"><path d="M4.500 1.500h5v9h-5zM1.500 8v5.500h11V8M7 14v3M4 17.500h6"/></svg></div>
<button class="app slim" aria-label="任务视图"><svg width="22" height="16" fill="none" stroke="#fff"><path d="M5.500 1.500h11v13h-11zM3 3.500H1.500v9H3M19 3.500h1.500v9H19"/></svg></button>
<button class="app" aria-label="风车"><svg width="22" height="22" fill="#ececec"><path d="M10.500 10.500C7 11 0 10 1 5s8-5 9.500-3zM11.500 10.500C11 7 12 0 17 1s5 8 3 9.500zM11.500 11.500C15 11 22 12 21 17s-8 5-9.500 3zM10.500 11.500C11 15 10 22 5 21s-5-8-3-9.500z"/></svg></button>
<button class="app" aria-label="提醒"><svg width="28" height="28" fill="none"><path d="M17 8Q8 5 4 12q-2 9 6 11 9 1 11-7-1-6-7-6-6 1-5 6 3 4 6 1 2-3-1-4-3 0-2 3" stroke="#ddd" stroke-width="1.200"/><path d="M15 11l2-3q0-5 4-6 5 1 5 6l2 3zM19 12h4v2h-4z" fill="#e2a818"/></svg></button>
<button class="app" aria-label="Edge"><svg width="22" height="22" viewBox="0 0 22 22"><path d="M1 11Q3 1 12 1q9 0 9 10v2H8q0 7 12 3v4Q4 25 4 14q0-4 4-7-4 1-7 4zM8 9h7q0-4-4-4-3 1-3 4z" fill="#0b78d7"/></svg></button>
<button class="app slim" aria-label="商店"><svg width="24" height="24"><path d="M1 6h22v17H1z" fill="#fff"/><path d="M8 6q0-4 4-4t4 4" fill="none" stroke="#fff"/><path d="M7 9h5v5H7z" fill="#f25022"/><path d="M13 9h5v5h-5z" fill="#7fba00"/><path d="M7 15h5v5H7z" fill="#00a4ef"/><path d="M13 15h5v5h-5z" fill="#ffb900"/></svg></button>
<button class="app" aria-label="文件资源管理器"><svg width="22" height="20"><path d="M0 1h8l1 2h13v15H0z" fill="#fde08a"/><path d="M4 18v-8h14v8h-4v-4H8v4z" fill="#35a9df"/></svg></button>
<button class="app slim" aria-label="Internet Explorer"><svg width="26" height="26"><path d="M4 14Q4 4 13 4t10 9v3H10q1 6 12 3-3 6-9 6-9-1-9-11zm6-2h7q0-4-3.500-4T10 12z" fill="#3aa1ea"/><path d="M3 24Q-1 18 9 8q11-9 15-6 2 2-2 6" fill="none" stroke="#f2c630" stroke-width="2"/></svg></button>
<button class="app live" aria-label="浏览器"><svg width="24" height="24"><circle cx="12" cy="12" r="10" fill="#50b928" stroke="#d9f0cf" stroke-width="1.500"/><path d="M18 12H6q1-6 6.500-6Q18 7 18 12zM6 12q1 7 11 4" fill="none" stroke="#fff" stroke-width="2.500"/></svg></button>
<button class="app live front" aria-label="GGJ2013"><svg width="24" height="24"><use href="#logo"/></svg></button>
<div class="ms-auto d-flex align-items-center">
<div class="cpu text-center me-3">100%<br>CPU使用</div>
<svg class="ms-1" width="12" height="10" fill="none" stroke="#fff" stroke-width="1.500"><path d="M1 8l5-5 5 5"/></svg>
<svg class="ms-2 me-1" width="22" height="16" fill="none" stroke="#fff"><path d="M6.500 4.500h12v8h-12zM19 7h2v3M2 2v4h5V2M4 6v4h2"/><path d="M9 6h8v5H9z" fill="#fff"/></svg>
<svg class="ms-1" width="14" height="16" fill="none" stroke="#aaa"><path d="M1 14Q1 3 13 3M4 14Q4 6 13 6M7 14Q8 9 13 9"/><circle cx="12" cy="13" r="1.500" fill="#fff"/></svg>
<svg class="mx-1" width="18" height="16" fill="none" stroke="#ddd"><path d="M1 6h3l4-4v12l-4-4H1zM10 5q2 3 0 6M13 3q3 5 0 10M15 2q4 6 0 12"/></svg>
<svg class="mx-1" width="24" height="16" fill="none" stroke="#fff"><path d="M.5 2.500h22v11H.5z"/><path d="M3 5.500h18M3 8.500h18M6 11.500h11" stroke-dasharray="2 1"/></svg>
<span class="fw-bold ms-2 me-2" style="font-size:13px">中</span>
<svg class="ms-1 me-2" width="16" height="16"><use href="#sogou"/></svg>
<div class="clock text-center mx-2">10:29<br>2017/11/14</div>
<div class="bell position-relative bg-black"><svg class="position-absolute" style="left:9px;top:11px" width="36" height="28"><path d="M0 1h16v13H7l-4 4v-4H0z" fill="#fff"/><path d="M3 5h10M3 8h10M3 11h7" stroke="#000"/><rect x="6" y="8" width="20" height="16" rx="8" fill="#444" stroke="#888"/><text x="9" y="20" font-size="12" font-weight="700" fill="#fff">20</text></svg></div>
</div></div>

<div class="count position-absolute">98</div>
<div class="ime position-absolute d-flex align-items-center">
<svg class="position-absolute" style="left:-7px;top:-4px" width="28" height="28"><use href="#sogou"/></svg>
<b class="ps-1 fs-6">中</b>
<svg width="14" height="16"><circle cx="3" cy="5" r="2" fill="none" stroke="#2374c6" stroke-width="1.500"/><path d="M9 9h3v3l-2 3H9l1-3H9z" fill="#2374c6"/></svg>
<svg width="14" height="18" fill="none" stroke="#2374c6" stroke-width="2"><rect x="5" y="2" width="4" height="8" rx="2" fill="#2374c6"/><path d="M2 7q0 6 5 6t5-6M7 13v3M4 16h6"/></svg>
<svg width="16" height="14"><rect width="16" height="12" y="1" rx="1" fill="#2374c6"/><path d="M2 4h12M2 7h12M4 10h8" stroke="#fff" stroke-dasharray="2 1"/></svg>
<svg width="16" height="16"><circle cx="6" cy="4" r="3" fill="#b4bdd4"/><path d="M0 14q0-7 6-7 4 0 5 3v4z" fill="#b4bdd4"/><text x="6" y="15" font-size="8" font-weight="700" fill="#8c98b8">19</text></svg>
<svg width="14" height="14"><path d="M4 1q3 2 6 0l4 3-2 3-2-1v8H4V6L2 7 0 4z" fill="#2374c6"/></svg>
<svg width="15" height="15"><path d="M2 13l7-7" stroke="#2374c6" stroke-width="3"/><path d="M14 4l-3 1-2-2 1-3Q5 1 7 6q4 3 7-2z" fill="#2374c6"/></svg>
</div>
<script src="https://cdn.jsdelivr.net/npm/bootstrap@5.3.0/dist/js/bootstrap.bundle.min.js"></script>
</body>
</html>
